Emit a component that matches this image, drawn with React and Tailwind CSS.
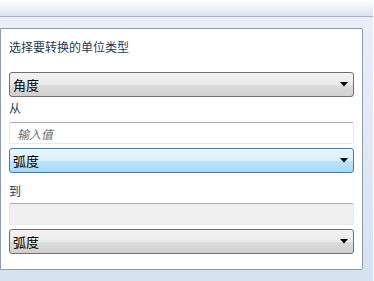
import { useState } from "react";

function Arrow() {
  return (
    <svg width="8" height="5" viewBox="0 0 8 5" className="shrink-0">
      <path d="M0 0 L8 0 L4 4.5 Z" fill="#000" />
    </svg>
  );
}

function Select({ value, active }) {
  const skin = active
    ? "border-[#3c7fb1] bg-[linear-gradient(#eaf6fd_0%,#d9f0fc_50%,#bee6fd_51%,#a7d9f5_100%)]"
    : "border-[#707070] bg-[linear-gradient(#f2f2f2_0%,#ebebeb_50%,#dddddd_51%,#cfcfcf_100%)]";
  return (
    <div className={`flex h-[25px] items-center justify-between rounded-[3px] border pl-[3px] pr-[5px] text-[13px] text-black ${skin}`}>
      <span>{value}</span>
      <Arrow />
    </div>
  );
}

export default function App() {
  const [amount, setAmount] = useState("");

  return (
    <div
      className="flex h-[281px] w-[374px] flex-col overflow-hidden border-r border-white bg-[linear-gradient(#eaf0f9,#d6e2ef)]"
      style={{ fontFamily: '"Noto Sans CJK SC", "Noto Sans", sans-serif' }}
    >
      {/* toolbar strip */}
      <div className="h-[17px] shrink-0 border-b border-[#aab3c4] bg-[linear-gradient(#ffffff,#dde2f0)]" />

      {/* converter panel */}
      <div className="mt-[11px] flex h-[242px] w-[363px] flex-col rounded-r-[2px] border border-[#8d9bb2] bg-white px-[8px] pt-[10px]">
        <div className="h-[16px] text-[12px] leading-[16px] text-[#1e395b]">选择要转换的单位类型</div>

        <div className="mt-[17px]">
          <Select value="角度" />
        </div>

        <div className="mt-[3px] h-[16px] text-[12px] leading-[16px] text-[#1e395b]">从</div>

        <input
          value={amount}
          onChange={(e) => setAmount(e.target.value)}
          placeholder="输入值"
          className="mt-[6px] h-[22px] rounded-[2px] border border-[#e3e9ef] border-t-[#abadb3] px-[7px] text-[12px] italic text-black outline-none placeholder:text-[#6d6d6d]"
        />

        <div className="mt-[4px]">
          <Select value="弧度" active />
        </div>

        <div className="mt-[10px] h-[16px] text-[12px] leading-[16px] text-[#1e395b]">到</div>

        <div className="mt-[4px] h-[22px] rounded-[2px] border border-[#e3e9ef] border-t-[#abadb3] bg-[#f0f0f0]" />

        <div className="mt-[4px]">
          <Select value="弧度" />
        </div>
      </div>
    </div>
  );
}
